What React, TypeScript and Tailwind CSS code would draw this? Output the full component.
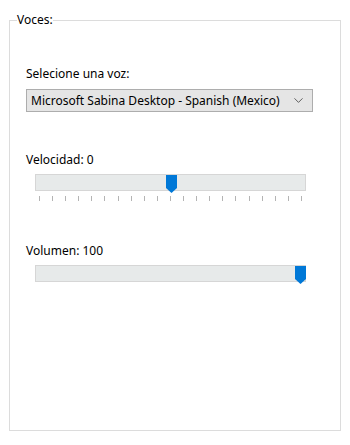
import { ChevronDown } from 'lucide-react';

const font = { fontFamily: '"Noto Sans", "Liberation Sans", sans-serif' };

function Thumb() {
  return (
    <svg width="11" height="18" viewBox="0 0 11 18" className="block">
      <path d="M0 0H11V13L5.5 18L0 13Z" fill="#0078d7" />
    </svg>
  );
}

function Slider({ pos, ticks }: { pos: number; ticks?: number }) {
  return (
    <div className="ml-[9px] w-[271px]">
      <div className="relative h-[17px] border border-[#d6d6d6] bg-[#e7eaea]">
        <div className="absolute top-0" style={{ left: pos }}>
          <Thumb />
        </div>
      </div>
      {ticks ? (
        <div className="mt-[5px] flex h-[5px] justify-between px-[4px]">
          {Array.from({ length: ticks }).map((_, i) => (
            <div key={i} className="h-[5px] w-px bg-[#b4b4b4]" />
          ))}
        </div>
      ) : null}
    </div>
  );
}

export default function App() {
  return (
    <div className="h-[445px] w-[350px] bg-white text-[12px] text-black" style={font}>
      <fieldset className="mx-[9px] mt-[12px] h-[419px] border border-[#dcdcdc]">
        <legend className="ml-[7px] leading-[16px]">Voces:</legend>
        <div className="flex flex-col px-[16px] pt-[38px]">
          <div className="leading-[16px]">Selecione una voz:</div>
          <div className="mt-[7px] flex h-[23px] w-[287px] items-center justify-between border border-[#adadad] bg-[#e5e5e5] pl-[4px] pr-[6px]">
            <span>Microsoft Sabina Desktop - Spanish (Mexico)</span>
            <ChevronDown size={15} strokeWidth={1.1} className="text-[#222]" />
          </div>
          <div className="mt-[40px] leading-[16px]">Velocidad: 0</div>
          <div className="mt-[6px]">
            <Slider pos={130} ticks={21} />
          </div>
          <div className="mt-[42px] leading-[16px]">Volumen: 100</div>
          <div className="mt-[6px]">
            <Slider pos={259} />
          </div>
        </div>
      </fieldset>
    </div>
  );
}
